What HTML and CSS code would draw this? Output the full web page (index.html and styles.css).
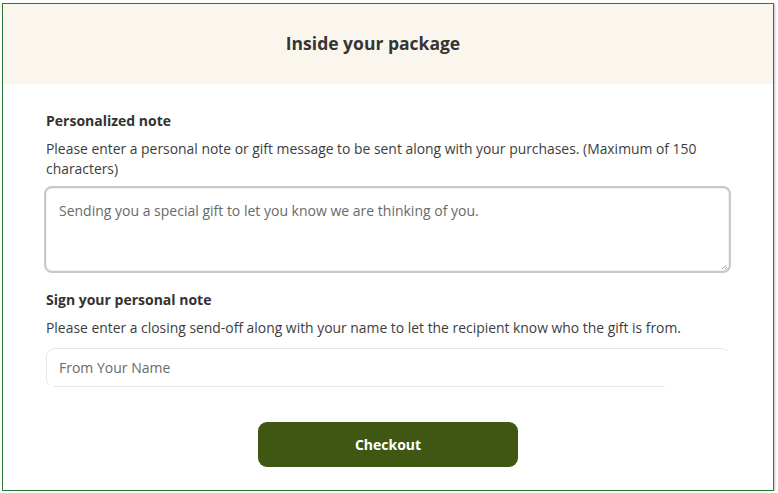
FILE: index.html
```html
<!DOCTYPE html>
<html lang="en">
<head>
<meta charset="utf-8">
<title>Inside your package</title>
<link rel="stylesheet" href="styles.css">
</head>
<body>
<div class="frame">
  <header class="head">
    <h1 class="title">Inside your package</h1>
  </header>
  <main class="content">
    <section class="field note">
      <h2 class="label">Personalized note</h2>
      <p class="desc">Please enter a personal note or gift message to be sent along with your purchases. (Maximum of 150 characters)</p>
      <div class="textarea">
        <span class="ph">Sending you a special gift to let you know we are thinking of you.</span>
        <span class="grip"></span>
      </div>
    </section>
    <section class="field sign">
      <h2 class="label">Sign your personal note</h2>
      <p class="desc">Please enter a closing send-off along with your name to let the recipient know who the gift is from.</p>
      <div class="input"><span class="ph">From Your Name</span></div>
    </section>
    <div class="actions">
      <button class="btn" type="button">Checkout</button>
    </div>
  </main>
</div>
</body>
</html>
```
FILE: styles.css
```css
html, body {
  margin: 0;
  padding: 0;
  background: #ffffff;
}
body {
  font-family: "Open Sans", "Liberation Sans", sans-serif;
  color: #3b3b3b;
}
.frame {
  margin: 3px 0 0 2px;
  width: 770px;
  height: 486px;
  border: 1.5px solid #2f7a36;
  box-shadow: 1px 1px 2px rgba(0,0,0,0.25);
  box-sizing: content-box;
  background: #fff;
  display: flex;
  flex-direction: column;
}
.head {
  height: 80px;
  background: #faf6ee;
  display: flex;
  align-items: center;
  justify-content: center;
  padding-right: 30px;
  padding-bottom: 2px;
  box-sizing: border-box;
}
.title {
  margin: 0;
  font-size: 17.5px;
  font-weight: 700;
  color: #353535;
}
.content {
  padding: 28px 43px 0 43px;
}
.label {
  margin: 0;
  font-size: 14px;
  font-weight: 700;
  line-height: 18px;
  color: #333;
}
.desc {
  margin: 9px 0 0;
  font-size: 13.9px;
  line-height: 20px;
  color: #3d3d3d;
}
.textarea {
  position: relative;
  margin: 7px -1px 0 -2px;
  border: 2px solid #c8c8c8;
  border-radius: 8px;
  box-shadow: inset 0 0 0 1px #f0f0f0;
  padding: 11px 13px;
  box-sizing: border-box;
  height: 87px;
}
.ph {
  font-size: 14px;
  color: #6a6a6a;
  line-height: 20px;
}
.grip {
  position: absolute;
  right: 2px;
  bottom: 2px;
  width: 5px;
  height: 5px;
  background: linear-gradient(135deg, transparent 50%, #aaa 50%, #aaa 60%, transparent 60%, transparent 75%, #aaa 75%, #aaa 85%, transparent 85%);
}
.sign {
  margin-top: 18px;
}
.input {
  margin-top: 10px;
  height: 40px;
  border: 1px solid #e6e6e6;
  border-right-color: transparent;
  border-bottom-color: transparent;
  border-radius: 9px 9px 0 9px;
  padding: 0 12px;
  display: flex;
  align-items: center;
  box-sizing: border-box;
  background: linear-gradient(#e6e6e6, #e6e6e6) no-repeat 6px 100% / calc(100% - 70px) 1px;
}
.actions {
  display: flex;
  justify-content: center;
  margin-top: 34px;
}
.btn {
  width: 260px;
  height: 45px;
  border: none;
  border-radius: 9px;
  background: #3f5712;
  color: #fff;
  font-family: "Open Sans", "Liberation Sans", sans-serif;
  font-size: 14px;
  font-weight: 700;
}
```
